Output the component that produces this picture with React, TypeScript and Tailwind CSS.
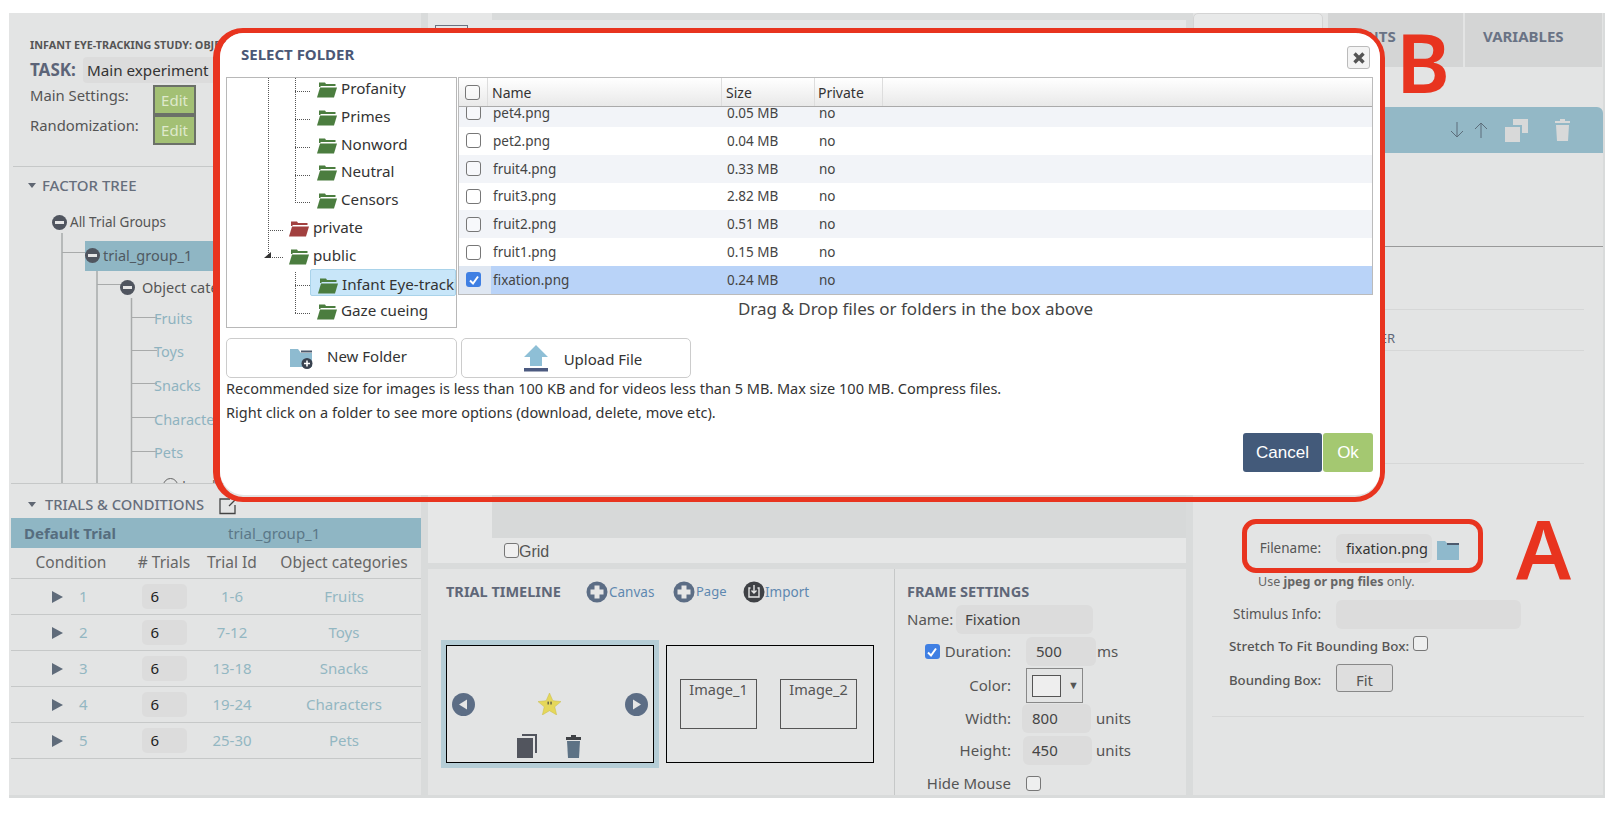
import React from "react";

function Box({ checked = false, cls = "" }: { checked?: boolean; cls?: string }) {
  return checked ? (
    <div className={"w-[15px] h-[15px] rounded-[3px] bg-[#3f7fe3] flex items-center justify-center shrink-0 " + cls}>
      <svg width="12" height="12" viewBox="0 0 12 12"><path d="M2 6.5 L5 9.5 L10 2.5" fill="none" stroke="#fff" strokeWidth="2" /></svg>
    </div>
  ) : (
    <div className={"w-[15px] h-[15px] rounded-[3px] border border-[#777] bg-white/40 shrink-0 " + cls} />
  );
}

function OpenFolder({ color }: { color: string }) {
  return (
    <svg width="20" height="17" viewBox="0 0 20 17" className="mt-[7px] shrink-0">
      <path d="M2 3 V1.5 H8 L9 3 H18.5 V5 H3.5 V6 H2 Z" fill={color} />
      <path d="M3 6.5 H20 L17 16.5 H0 Z" fill={color} />
    </svg>
  );
}

function TreeRow({ label, level, selected = false, color = "#4b7d3f" }: { label: string; level: number; selected?: boolean; color?: string }) {
  return (
    <div className={(level === 2 ? "ml-[83px] " : "ml-[55px] ") + "h-[27.8px] pl-[7px] flex gap-[4px] whitespace-nowrap overflow-hidden items-start " + (selected ? "bg-[#c8e6f9] border border-[#a9d3ea] rounded-[2px]" : "")}>
      <OpenFolder color={color} />
      <span className="leading-[26px] pt-[1px] text-[15.2px] text-[#333]">{label}</span>
    </div>
  );
}

const files: [string, string, boolean][] = [
  ["pet2.png", "0.04 MB", false],
  ["fruit4.png", "0.33 MB", true],
  ["fruit3.png", "2.82 MB", false],
  ["fruit2.png", "0.51 MB", true],
  ["fruit1.png", "0.15 MB", false],
];

function FileRow({ name, size, tint, selected = false }: { name: string; size: string; tint: boolean; selected?: boolean }) {
  return (
    <div className={"h-[27.8px] flex items-center text-[13.5px] text-[#444] " + (selected ? "bg-[#dfe7f2]" : tint ? "bg-[#f2f4f8]" : "bg-white")}>
      <div className="w-[30px] pl-[7px]"><Box checked={selected} /></div>
      <div className={"flex flex-1 h-full items-center " + (selected ? "bg-[#b9d3f8] ml-[2px]" : "")}>
        <div className={(selected ? "w-[232px] pl-[2px]" : "w-[234px] pl-[4px]")}>{name}</div>
        <div className="w-[93px] pl-[4px]">{size}</div>
        <div className="pl-[3px]">no</div>
      </div>
    </div>
  );
}

function Modal() {
  return (
    <div className="absolute left-[213px] top-[28px] w-[1172px] h-[474px] border-t-[5px] border-b-[5px] border-r-[5px] border-l-[7px] border-[#e8341f] rounded-[30px] z-10">
      <div className="relative w-full h-[462px] bg-white rounded-[24px] flex flex-col">
        <div className="h-[44px] pl-[21px] pt-[9px] text-[15px] leading-[24px] font-bold text-[#4b5876]">SELECT FOLDER</div>
        <div className="absolute right-[10px] top-[13px] w-[23px] h-[23px] border border-[#bbb] rounded-[3px] bg-[#f4f4f4] flex items-center justify-center">
          <svg width="12" height="12" viewBox="0 0 12 12"><path d="M1.5 1.5 L10.5 10.5 M10.5 1.5 L1.5 10.5" stroke="#555" strokeWidth="3.4" /></svg>
        </div>
        <div className="flex pl-[6px] gap-[1px]">
          <div className="relative w-[231px] h-[251px] border border-[#b8b8b8] overflow-hidden">
            <svg className="absolute left-0 top-0" width="229" height="249">
              <g stroke="#555" strokeWidth="1" strokeDasharray="1 1" fill="none">
                <path d="M41.5 0 V180 M68.5 0 V124 M68 13.5 H83 M68 41.5 H83 M68 69.5 H83 M68 97.5 H83 M68 124.5 H83 M41 152.5 H57 M41 179.5 H57 M68.5 194 V235 M68 207.5 H83 M68 235.5 H83" />
              </g>
              <path d="M37 180 L44 180 L44 174 Z" fill="#333" />
            </svg>
            <div className="relative -mt-[4px]">
              {["Profanity", "Primes", "Nonword", "Neutral", "Censors"].map((l) => <TreeRow key={l} label={l} level={2} />)}
              <TreeRow label="private" level={1} color="#a2403f" />
              <TreeRow label="public" level={1} />
              <TreeRow label="Infant Eye-tracking" level={2} selected />
              <TreeRow label="Gaze cueing" level={2} />
            </div>
          </div>
          <div className="w-[915px] flex flex-col">
            <div className="border border-[#bbb]">
              <div className="h-[29px] flex items-center text-[14px] text-[#333] border-b border-[#aaa] bg-gradient-to-b from-white to-[#e9e9e9]">
                <div className="w-[29px] h-full flex items-center pl-[6px] border-r border-[#ddd]"><Box /></div>
                <div className="w-[234px] h-full flex items-center pl-[4px] border-r border-[#ddd]">Name</div>
                <div className="w-[93px] h-full flex items-center pl-[4px] border-r border-[#ddd]">Size</div>
                <div className="w-[68px] h-full flex items-center pl-[3px] border-r border-[#ddd]">Private</div>
              </div>
              <div className="h-[20px] overflow-hidden bg-[#f2f4f8]">
                <div className="-mt-[8px]"><FileRow name="pet4.png" size="0.05 MB" tint /></div>
              </div>
              {files.map(([n, s, t]) => <FileRow key={n} name={n} size={s} tint={t} />)}
              <FileRow name="fixation.png" size="0.24 MB" tint={false} selected />
            </div>
            <div className="text-center text-[17px] leading-[24px] text-[#444] mt-[2px]">Drag &amp; Drop files or folders in the box above</div>
          </div>
        </div>
        <div className="flex pl-[6px] gap-[4px] mt-[10px]">
          <div className="w-[231px] h-[40px] border border-[#ccc] rounded-[5px] flex items-center justify-center gap-[14px] pl-[14px] text-[15px] text-[#333]">
            <svg width="23" height="21" viewBox="0 0 23 21"><path d="M0 1 H8 L11 5 H22 V19 H0 Z" fill="#8ebbd0" /><path d="M11 2.5 H22 V4.5 H11 Z" fill="#4d5a6d" /><circle cx="17" cy="15.5" r="5.5" fill="#39424f" /><path d="M17 12.5 V18.5 M14 15.5 H20" stroke="#fff" strokeWidth="1.6" /></svg>
            <span className="-mt-[3px]">New Folder</span>
          </div>
          <div className="w-[230px] h-[40px] border border-[#ccc] rounded-[5px] flex items-center justify-center gap-[16px] pl-[14px] text-[15px] text-[#333]">
            <svg width="24" height="27" viewBox="0 0 24 27"><path d="M12 0 L24 12 H18 V21 H6 V12 H0 Z" fill="#8ebfd6" /><rect x="0" y="23" width="24" height="3.5" fill="#4c5a80" /></svg>
            <span className="mt-[3px]">Upload File</span>
          </div>
        </div>
        <div className="pl-[6px] text-[14.5px] leading-[24px] text-[#333] -mt-[2px]">
          <p>Recommended size for images is less than 100 KB and for videos less than 5 MB. Max size 100 MB. Compress files.</p>
          <p>Right click on a folder to see more options (download, delete, move etc).</p>
        </div>
        <div className="flex justify-end pr-[7px] gap-[1px] mt-[9px] font-['Liberation_Sans',sans-serif] text-[17px]">
          <div className="w-[79px] h-[39px] rounded-[3px] bg-[#435a7a] text-white flex items-center justify-center">Cancel</div>
          <div className="w-[50px] h-[39px] rounded-[3px] bg-[#a4c871] text-white flex items-center justify-center">Ok</div>
        </div>
      </div>
    </div>
  );
}

function Minus({ cls = "" }: { cls?: string }) {
  return (
    <svg width="15" height="15" viewBox="0 0 15 15" className={"shrink-0 " + cls}>
      <circle cx="7.5" cy="7.5" r="7.5" fill="#50555f" />
      <rect x="3" y="6" width="9" height="3" fill="#e6e6e6" />
    </svg>
  );
}

function Caret({ cls = "" }: { cls?: string }) {
  return <svg width="8" height="5" viewBox="0 0 8 5" className={"shrink-0 " + cls}><path d="M0 0 H8 L4 5 Z" fill="#5f6672" /></svg>;
}

const editBtn = "w-[43px] h-[30px] bg-[#a3c074] border-2 border-[#6b7068] text-[#dfe9cc] text-[15px] flex items-center justify-center";

const treeLeaves: [string, number][] = [["Fruits", 33], ["Toys", 34], ["Snacks", 34], ["Characters", 33], ["Pets", 34]];

function FactorTree() {
  return (
    <div className="relative h-[317px] overflow-hidden border-b border-[#c6c8c8] shrink-0">
      <svg className="absolute left-0 top-0" width="410" height="317">
        <g stroke="#a8aaaa" fill="none">
          <path strokeWidth="1.5" d="M51 66 V317 M86 104 V317 M120.5 131 V317" />
          <path d="M51 85.5 H76 M86 117.5 H111 M121 150.5 H146 M121 183.5 H146 M121 216.5 H146 M121 250.5 H146 M121 284.5 H146" />
        </g>
      </svg>
      <div className="relative">
        <div className="h-[38px] flex items-center pl-[17px] gap-[6px] text-[15px] text-[#666e7c] font-medium -mt-[1px] mb-[1px]"><Caret />FACTOR TREE</div>
        <div className="h-[34px] flex items-center pl-[41px] gap-[3px] text-[13.5px] text-[#555]"><Minus />All Trial Groups</div>
        <div className="h-[33px] flex items-center pl-[74px]">
          <div className="h-[30px] w-[142px] bg-[#8fb6c4] flex items-center gap-[3px] text-[14.5px] text-[#4f5a62] whitespace-nowrap"><Minus />trial_group_1</div>
        </div>
        <div className="h-[31px] flex items-center pl-[109px] gap-[7px] text-[14.5px] text-[#555] whitespace-nowrap"><Minus />Object categories</div>
        {treeLeaves.map(([l, h]) => (
          <div key={l} style={{ height: h }} className="flex items-center pl-[143px] pb-[2px] text-[14.5px] text-[#8fb3c0]">{l}</div>
        ))}
        <div className="h-[28px] flex items-center pl-[152px] gap-[4px] text-[14px] text-[#666]">
          <div className="w-[15px] h-[15px] rounded-full border border-[#666]" />Level
        </div>
      </div>
    </div>
  );
}

const conds: [string, string, string][] = [["1", "1-6", "Fruits"], ["2", "7-12", "Toys"], ["3", "13-18", "Snacks"], ["4", "19-24", "Characters"], ["5", "25-30", "Pets"]];

function Trials() {
  return (
    <div className="flex flex-col">
      <div className="h-[34px] flex items-center pl-[17px] pt-[7px] gap-[9px] text-[14.7px] text-[#666e7c] font-medium">
        <Caret />TRIALS &amp; CONDITIONS
        <svg width="20" height="18" viewBox="0 0 20 18" className="ml-[6px] mt-[3px]"><path d="M11 2 H1 V16.5 H16 V8" fill="none" stroke="#444" strokeWidth="1.3" /><path d="M10 9 L18 1" stroke="#444" strokeWidth="1.3" /></svg>
      </div>
      <div className="h-[30px] bg-[#8fb6c4] flex items-center text-[15px]">
        <span className="pl-[13px] w-[217px] font-bold text-[#566d7e]">Default Trial</span>
        <span className="text-[#5b7888]">trial_group_1</span>
      </div>
      <div className="h-[31px] grid grid-cols-[120px_66px_70px_154px] items-center text-center text-[15.5px] text-[#666] border-b border-[#c6c8c8]">
        <span>Condition</span><span># Trials</span><span>Trial Id</span><span className="whitespace-nowrap">Object categories</span>
      </div>
      {conds.map(([n, id, o]) => (
        <div key={n} className="h-[36px] grid grid-cols-[120px_66px_70px_154px] items-center text-center text-[15px] text-[#93b7c2] border-b border-[#c6c8c8]">
          <div className="flex items-center pl-[41px]">
            <svg width="11" height="12" viewBox="0 0 11 12"><path d="M0 0 L11 6 L0 12 Z" fill="#5f6b7a" /></svg>
            <span className="ml-[16px]">{n}</span>
          </div>
          <div className="flex justify-center"><div className="w-[45px] h-[25px] rounded-[5px] bg-[#dcdcdc] text-left pl-[9px] text-[#222] leading-[25px]">6</div></div>
          <span>{id}</span>
          <span>{o}</span>
        </div>
      ))}
    </div>
  );
}

function Left() {
  return (
    <div className="w-[412px] h-[782px] bg-[#e3e4e4] pl-[2px] flex flex-col overflow-hidden">
      <div className="h-[154px] border-b border-[#c6c8c8] pl-[17px] pt-[25px] shrink-0 ml-[2px]">
        <div className="text-[10.8px] leading-[14px] font-bold text-[#555] whitespace-nowrap">INFANT EYE-TRACKING STUDY: OBJECT CATEGORIES</div>
        <div className="flex items-center h-[26px] mt-[5px]">
          <span className="text-[17px] font-bold text-[#5c6478] w-[53px]">TASK:</span>
          <div className="h-[26px] w-[140px] bg-[#dcdcdc] rounded-[4px] pl-[4px] text-[15.2px] leading-[26px] text-[#333] flex items-center gap-[4px] whitespace-nowrap">
            Main experiment
            <svg width="9" height="6" viewBox="0 0 9 6"><path d="M1 1 L4.5 5 L8 1" fill="none" stroke="#333" strokeWidth="1.6" /></svg>
          </div>
        </div>
        <div className="flex items-start mt-[2px] text-[14.8px] leading-[20px] text-[#555]"><span className="w-[123px]">Main Settings:</span><div className={editBtn}>Edit</div></div>
        <div className="flex items-start mt-[0px] text-[14.8px] leading-[20px] text-[#555]"><span className="w-[123px]">Randomization:</span><div className={editBtn}>Edit</div></div>
      </div>
      <FactorTree />
      <Trials />
    </div>
  );
}

function Plus({ dark = false }: { dark?: boolean }) {
  return (
    <svg width="22" height="22" viewBox="0 0 22 22" className="shrink-0">
      <circle cx="11" cy="11" r="10.5" fill={dark ? "#3f4145" : "#5c6d85"} />
      {dark ? (
        <g fill="none" stroke="#e6e6e6" strokeWidth="1.4"><path d="M7.5 7 H6 V16 H16 V7 H14.5" /><path d="M11 4 V12 M8.5 9.5 L11 12 L13.5 9.5" /></g>
      ) : (
        <path d="M8.5 4.5 H13.5 V8.5 H17.5 V13.5 H13.5 V17.5 H8.5 V13.5 H4.5 V8.5 H8.5 Z" fill="#e6e6e6" />
      )}
    </svg>
  );
}

function NavBtn({ dir }: { dir: "l" | "r" }) {
  return (
    <svg width="23" height="23" viewBox="0 0 23 23">
      <circle cx="11.5" cy="11.5" r="11.5" fill="#5c6d85" />
      <path d={dir === "l" ? "M7 11.5 L15 6.5 V16.5 Z" : "M16 11.5 L8 6.5 V16.5 Z"} fill="#e6e6e6" />
    </svg>
  );
}

function Timeline() {
  return (
    <div className="w-[467px] h-full border-r border-[#c6c8c8] pt-[11px] shrink-0">
      <div className="h-[24px] flex items-center pl-[18px]">
        <span className="w-[140px] text-[14.5px] font-bold text-[#5f6778] whitespace-nowrap">TRIAL TIMELINE</span>
        <Plus /><span className="text-[13.5px] text-[#5e88b0] ml-[1px] w-[64px]">Canvas</span>
        <Plus /><span className="text-[13px] text-[#5e88b0] ml-[1px] w-[47px]">Page</span>
        <Plus dark /><span className="text-[13.5px] text-[#5e88b0]">Import</span>
      </div>
      <div className="flex items-start mt-[36px] ml-[13px]">
        <div className="w-[218px] h-[128px] border-[5px] border-[#b5cdd6]">
          <div className="relative w-[208px] h-[118px] border border-black">
            <div className="absolute left-[5px] top-[47px]"><NavBtn dir="l" /></div>
            <div className="absolute right-[5px] top-[47px]"><NavBtn dir="r" /></div>
            <svg className="absolute left-[91px] top-[47px]" width="23" height="22" viewBox="0 0 24 23">
              <path d="M12 0 L15.5 8 L24 9 L17.5 14.5 L19.5 23 L12 18.5 L4.5 23 L6.5 14.5 L0 9 L8.5 8 Z" fill="#e5d75a" stroke="#c9bb45" strokeWidth="0.5" />
              <rect x="10" y="9" width="1.2" height="3" fill="#444" /><rect x="13" y="9" width="1.2" height="3" fill="#444" />
            </svg>
            <svg className="absolute left-[70px] top-[88px]" width="20" height="24" viewBox="0 0 20 24"><path d="M5 0 H20 V19 H18 V2 H5 Z" fill="#52555e" /><rect x="0" y="4" width="16" height="20" fill="#52555e" /></svg>
            <svg className="absolute left-[119px] top-[89px]" width="15" height="23" viewBox="0 0 15 23"><path d="M5 0 H10 V2 H15 V5 H0 V2 H5 Z" fill="#3f4145" /><path d="M1 6 H14 L13 23 H2 Z" fill="#5d7285" /></svg>
          </div>
        </div>
        <div className="w-[208px] h-[118px] border border-black ml-[7px] mt-[5px] flex items-center pl-[13px] gap-[23px] text-[14.5px] text-[#555]">
          <div className="w-[77px] h-[50px] border-[1.5px] border-[#555] text-center leading-[19px]">Image_1</div>
          <div className="w-[77px] h-[50px] border-[1.5px] border-[#555] text-center leading-[19px]">Image_2</div>
        </div>
      </div>
    </div>
  );
}

function SetInput({ v, cls }: { v: string; cls: string }) {
  return <div className={"h-[29px] rounded-[6px] bg-[#dcdcdc] leading-[29px] text-[#444] " + cls}>{v}</div>;
}

function FrameSettings() {
  const label = "w-[116px] text-right shrink-0";
  return (
    <div className="flex-1 h-full pt-[14px] text-[15px] text-[#555] overflow-hidden">
      <div className="pl-[12px] h-[16px] leading-[16px] text-[14.5px] font-bold text-[#5f6778]">FRAME SETTINGS</div>
      <div className="flex items-center mt-[6px] pl-[12px]"><span className="w-[49px]">Name:</span><SetInput v="Fixation" cls="w-[137px] pl-[9px]" /></div>
      <div className="flex items-center mt-[3px]">
        <div className={label + " flex items-center justify-end gap-[5px]"}><Box checked />Duration:</div>
        <SetInput v="500" cls="w-[70px] ml-[15px] pl-[10px]" /><span className="ml-[1px]">ms</span>
      </div>
      <div className="flex items-center mt-[2px]">
        <div className={label}>Color:</div>
        <div className="w-[57px] h-[35px] ml-[15px] border border-[#888] flex items-center pl-[5px] gap-[7px]">
          <div className="w-[29px] h-[22px] border border-[#555] bg-[#eee]" />
          <span className="text-[11px] text-[#555]">▼</span>
        </div>
      </div>
      <div className="flex items-center mt-[1px]">
        <div className={label}>Width:</div>
        <SetInput v="800" cls="w-[69px] ml-[11px] pl-[10px]" /><span className="ml-[5px]">units</span>
      </div>
      <div className="flex items-center mt-[3px]">
        <div className={label}>Height:</div>
        <SetInput v="450" cls="w-[69px] ml-[12px] pl-[9px]" /><span className="ml-[4px]">units</span>
      </div>
      <div className="flex items-center mt-[10px] h-[16px]">
        <div className={label}>Hide Mouse</div>
        <Box cls="ml-[15px]" />
      </div>
    </div>
  );
}

function Center() {
  return (
    <div className="w-[758px] flex flex-col">
      <div className="h-[550px] flex bg-[#e6e7e7] shrink-0">
        <div className="w-[64px] pt-[12px] pl-[7px]"><div className="w-[33px] h-[20px] border border-[#6b7280]" /></div>
        <div className="flex-1 flex flex-col">
          <div className="h-[7px] bg-[#d9dbdb]" />
          <div className="flex-1 bg-[#d7d9d9] mt-[10px]" />
          <div className="h-[25px] flex items-center pl-[12px] pt-[2px] text-[16px] text-[#555] font-['Liberation_Sans',sans-serif]"><Box cls="-mt-[3px]" />Grid</div>
        </div>
      </div>
      <div className="h-[226px] mt-[6px] flex bg-[#e3e4e4]">
        <Timeline />
        <FrameSettings />
      </div>
    </div>
  );
}

function Right() {
  const rowLabel = "w-[128px] text-right shrink-0";
  return (
    <div className="w-[410px] h-[782px] bg-[#e3e4e4] flex flex-col text-[13.5px] text-[#555]">
      <div className="h-[54px] flex shrink-0">
        <div className="w-[130px] bg-[#e8e9e9] border border-[#d4d4d4] rounded-t-[5px]" />
        <div className="w-[135px] ml-[5px] bg-[#d4d5d5] flex items-center pl-[12px] text-[15px] font-bold text-[#6a7385] pb-[8px]">EVENTS</div>
        <div className="w-[137px] ml-[2px] bg-[#d4d5d5] flex items-center pl-[18px] text-[15px] font-bold text-[#6a7385] pb-[8px]">VARIABLES</div>
      </div>
      <div className="h-[46px] mt-[40px] bg-[#93b8c6] rounded-tr-[6px] flex items-center justify-end pr-[33px] shrink-0">
        <svg width="14" height="18" viewBox="0 0 14 18"><path d="M7 1 V16 M1 10 L7 16 L13 10" fill="none" stroke="#5c6d7a" strokeWidth="1" /></svg>
        <svg width="14" height="18" viewBox="0 0 14 18" className="ml-[10px]"><path d="M7 17 V2 M1 8 L7 2 L13 8" fill="none" stroke="#5c6d7a" strokeWidth="1" /></svg>
        <svg width="23" height="23" viewBox="0 0 23 23" className="ml-[17px]"><path d="M8 0 H23 V14 H17 V6 H8 Z" fill="#d8d9d9" /><rect x="0" y="8" width="15" height="15" fill="#d8d9d9" /></svg>
        <svg width="15" height="22" viewBox="0 0 15 22" className="ml-[27px]"><path d="M5 0 H10 V2 H15 V4 H0 V2 H5 Z" fill="#d8d9d9" /><path d="M1 6 H14 L13 22 H2 Z" fill="#d8d9d9" /></svg>
      </div>
      <div className="h-[94px] border-b border-[#999] shrink-0" />
      <div className="h-[63px] ml-[19px] mr-[19px] border-b border-[#d6d7d7] shrink-0" />
      <div className="h-[41px] ml-[19px] mr-[19px] border-b border-[#d6d7d7] flex items-end pb-[2px] shrink-0">
        <div className="w-[183px] text-right text-[13px] text-[#5f6778] whitespace-nowrap">TRIGGER</div>
      </div>
      <div className="h-[113px] ml-[19px] mr-[19px] border-b border-[#d6d7d7] shrink-0" />
      <div className="h-[70px] pl-[37px] pt-[17px] text-[13px] font-bold text-[#5f6778] shrink-0">IMAGE</div>
      <div className="flex items-center h-[29px] shrink-0">
        <div className={rowLabel}>Filename:</div>
        <div className="w-[96px] h-[29px] rounded-[6px] bg-[#dcdcdc] ml-[15px] pl-[10px] text-[14.5px] leading-[29px] text-[#333] whitespace-nowrap">fixation.png</div>
        <svg width="22" height="19" viewBox="0 0 22 19" className="ml-[5px] mt-[3px]"><path d="M0 0 H8 L11 3 H22 V19 H0 Z" fill="#8fb9cc" /><path d="M10 2 H22 V4 H10 Z" fill="#4d5a6d" /></svg>
      </div>
      <div className="pl-[65px] mt-[10px] h-[18px] leading-[18px] text-[12.5px] text-[#666] shrink-0">Use <b>jpeg or png files</b> only.</div>
      <div className="flex items-center h-[29px] mt-[9px] shrink-0">
        <div className={rowLabel}>Stimulus Info:</div>
        <div className="w-[185px] h-[29px] rounded-[6px] bg-[#dcdcdc] ml-[15px]" />
      </div>
      <div className="flex items-start h-[20px] mt-[7px] pl-[36px] text-[13.4px] font-medium shrink-0 whitespace-nowrap">
        <span>Stretch To Fit Bounding Box:</span><Box cls="ml-[4px]" />
      </div>
      <div className="flex items-center h-[28px] mt-[8px] shrink-0">
        <div className={rowLabel + " font-medium text-[13.2px] pt-[5px]"}>Bounding Box:</div>
        <div className="w-[57px] h-[28px] ml-[15px] border border-[#888] rounded-[3px] bg-[#dedede] flex items-center justify-center pt-[4px] text-[15px]">Fit</div>
      </div>
      <div className="h-[25px] ml-[19px] mr-[19px] border-b border-[#d6d7d7] shrink-0" />
    </div>
  );
}

export default function App() {
  return (
    <div className="relative w-[1618px] h-[814px] bg-white overflow-hidden font-['Noto_Sans',sans-serif]">
      <div className="absolute left-[9px] top-[13px] w-[1596px] h-[785px] bg-[#d9dbdb] flex gap-[7px]">
        <Left />
        <Center />
        <Right />
      </div>
      <Modal />
      <div className="absolute left-[1396px] top-[4px] text-[82px] leading-[114px] font-semibold text-[#e8341f] z-20">B</div>
      <div className="absolute left-[1516px] top-[490px] text-[82px] leading-[114px] font-semibold text-[#e8341f] z-20">A</div>
      <div className="absolute left-[1242px] top-[519px] w-[241px] h-[54px] border-[5px] border-[#e8341f] rounded-[14px] z-20" />
    </div>
  );
}
